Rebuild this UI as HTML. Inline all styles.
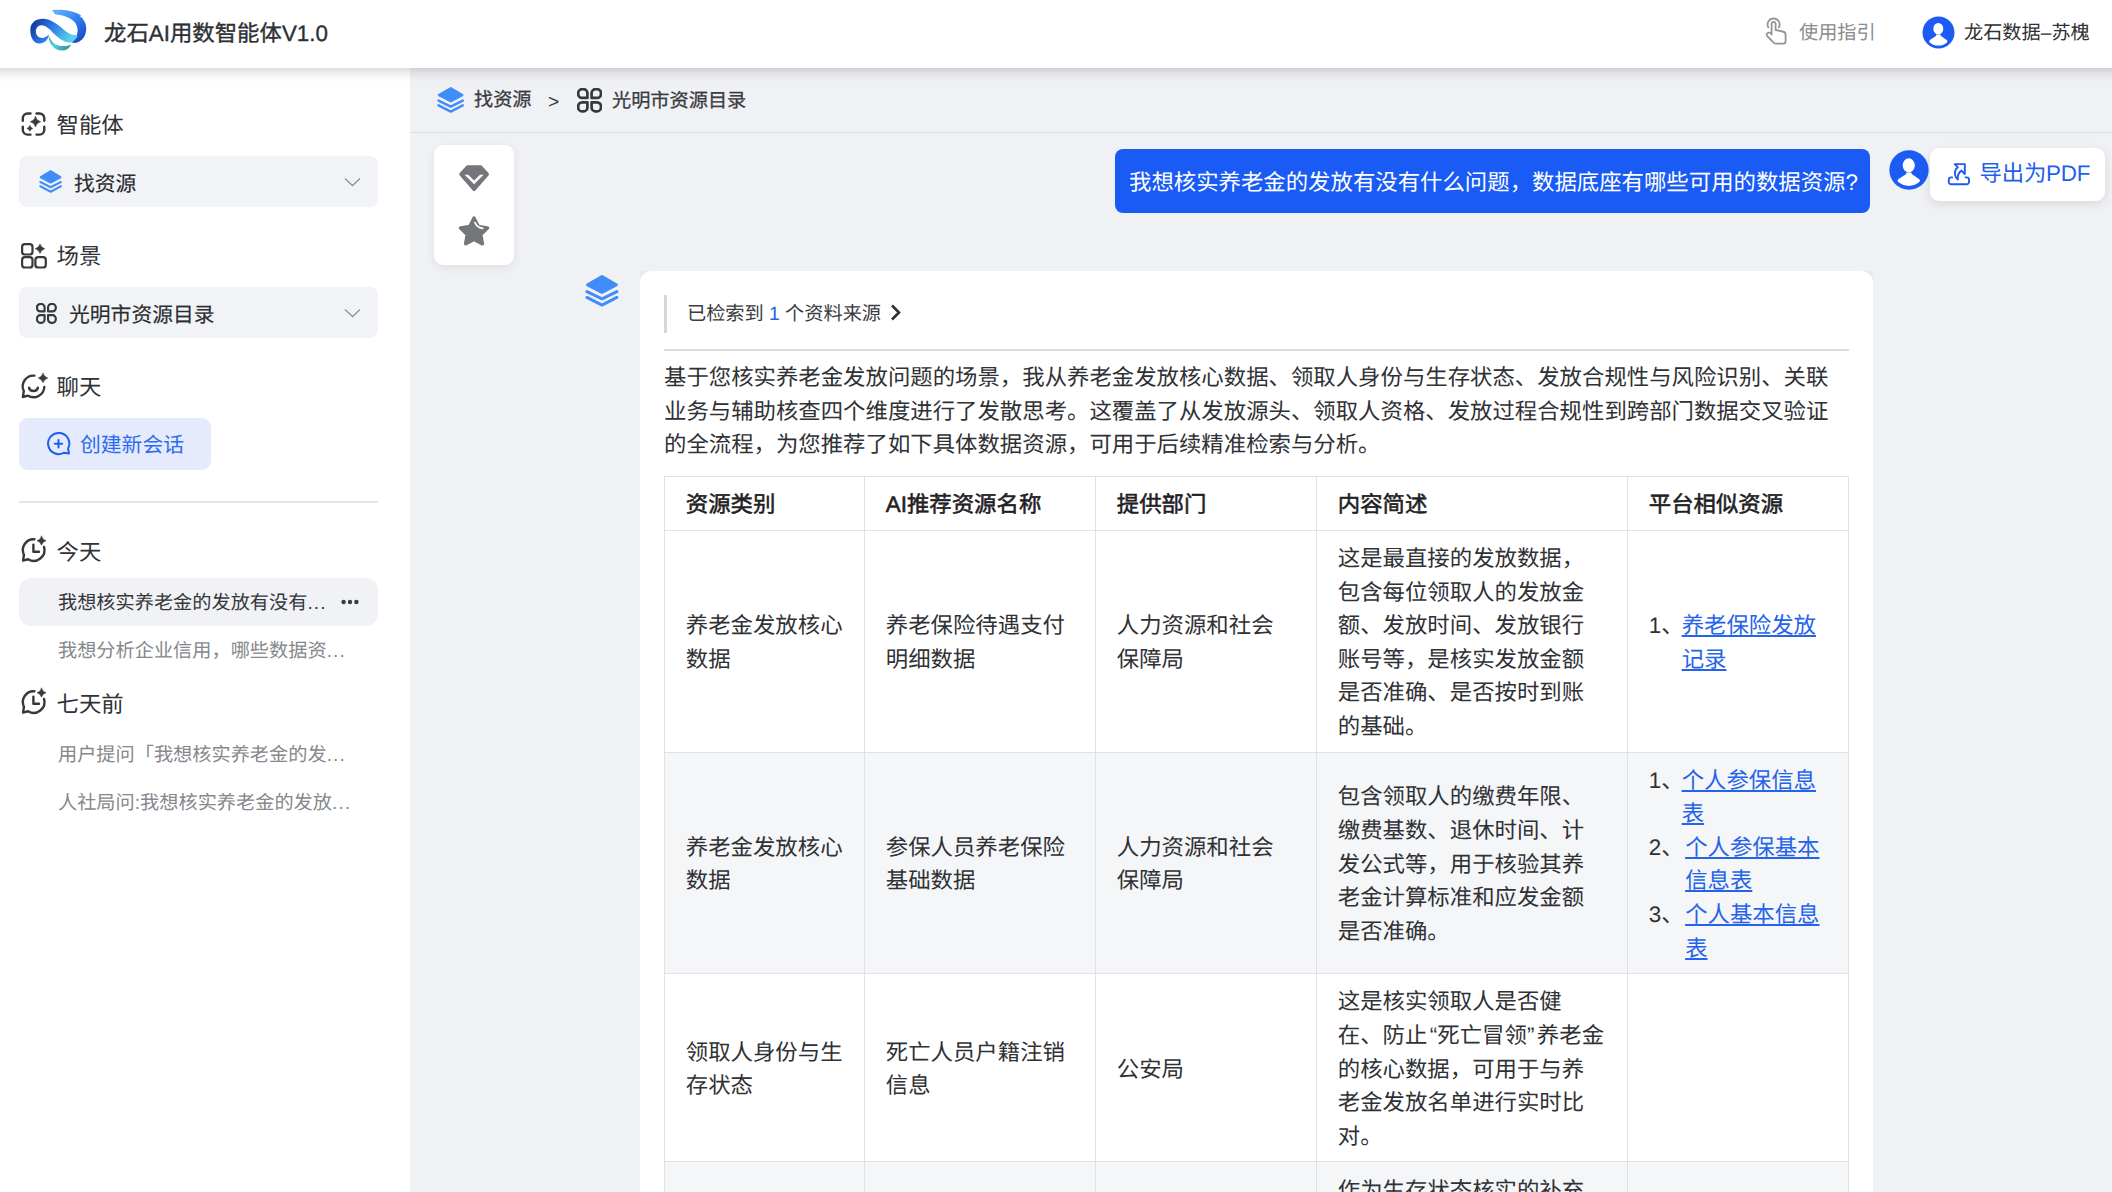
<!DOCTYPE html>
<html lang="zh-CN">
<head>
<meta charset="utf-8">
<style>
*{box-sizing:border-box;margin:0;padding:0}
html,body{width:2112px;height:1192px;overflow:hidden}
body{text-rendering:geometricPrecision;font-family:"Liberation Sans",sans-serif;background:#f0f1f5;color:#2f3135;position:relative;font-size:22.4px}
.abs{position:absolute}
#header{left:0;top:0;width:2112px;height:68px;background:#fff;z-index:5}
#hshadow{left:0;top:68px;width:2112px;height:15px;z-index:5;background:linear-gradient(rgba(0,0,0,0.135),rgba(0,0,0,0.07) 30%,rgba(0,0,0,0.03) 60%,rgba(0,0,0,0.008) 85%,rgba(0,0,0,0))}
#sidebar{left:0;top:68px;width:410px;height:1124px;background:#fff}
.sec{position:absolute;left:21px;height:30px;display:flex;align-items:center}
.sec svg{width:26px;height:26px}
.sec span{margin-left:35.5px;font-size:22.4px;color:#303236;line-height:30px;position:relative;top:1.7px}
.sel{position:absolute;left:19px;width:359px;height:51px;background:#f2f3f7;border-radius:8px}
.sel .t{position:absolute;font-size:20.8px;line-height:30px;top:13.5px;color:#2b2d31;-webkit-text-stroke:0.15px currentColor}
.sel .chev{position:absolute;left:324.5px;top:21px}
.hist{position:absolute;left:19px;width:359px;height:48px;border-radius:12px}
.hist .t{position:absolute;left:39px;top:10.5px;font-size:19.2px;line-height:30px;color:#86888d;white-space:nowrap}

table{margin-top:14.2px;border-collapse:collapse;width:1185px;table-layout:fixed;font-size:22.4px;line-height:33.6px}
th,td{border:1.6px solid #dfe1e6;padding:11.2px 20.8px 8px;text-align:left;vertical-align:middle;color:#2f3135}
th{font-weight:normal;-webkit-text-stroke:0.55px currentColor;color:#1f2124}
tr.alt td{background:#f5f6f8}
.li{display:flex}
.li .n{flex:none;margin-right:-2px}
.li a{color:#2563eb;text-decoration:underline;text-underline-offset:1.5px}
</style>
</head>
<body>
<div id="header" class="abs">
  <svg class="abs" style="left:20px;top:0px" width="80" height="60" viewBox="0 0 80 60">
    <defs>
      <linearGradient id="lgS" x1="16" y1="19" x2="48" y2="42" gradientUnits="userSpaceOnUse">
        <stop offset="0" stop-color="#1838a6"/><stop offset="0.45" stop-color="#2b7ae6"/><stop offset="1" stop-color="#5ad2ee"/>
      </linearGradient>
      <linearGradient id="lgL" x1="10" y1="28" x2="28" y2="42" gradientUnits="userSpaceOnUse">
        <stop offset="0" stop-color="#2f86ea"/><stop offset="1" stop-color="#3d9fe6"/>
      </linearGradient>
      <linearGradient id="lgR" x1="34" y1="10" x2="62" y2="42" gradientUnits="userSpaceOnUse">
        <stop offset="0" stop-color="#63b6fb"/><stop offset="0.55" stop-color="#2f7cf0"/><stop offset="1" stop-color="#1a45c0"/>
      </linearGradient>
      <linearGradient id="lgT" x1="28" y1="36" x2="51" y2="48" gradientUnits="userSpaceOnUse">
        <stop offset="0" stop-color="#3c8fb5"/><stop offset="0.35" stop-color="#55d3e6"/><stop offset="1" stop-color="#2f8a8f"/>
      </linearGradient>
    </defs>
    <path d="M32 10 C42 9 54 10.5 61.5 15.5 L59.5 15.8 C64.5 19.5 67 25 66 31.5 C65 38 60.5 42.5 54 43 L50 41.5 C55.5 40 58 35 57.5 29 C57 21 49 15.5 35 14.2 Z" fill="url(#lgR)"/>
    <path d="M10.3 30 C10.3 22 17 18.3 24 18.8 C31 19.3 37 24 43 29 C47 32.5 51 35.2 56.5 35.2 L57.5 36 C55 41 52 43 49 42.6 C44 42.2 39 38.5 34 33.8 C30 29.5 26 25.3 21.5 25.3 C17.8 25.3 15.8 28.5 15.9 31.8 C16 35.5 19 38.2 22.5 38 C25 37.8 27 36.5 28.8 34.6 C28.3 40 24.5 43.6 19.5 43.6 C13.5 43.4 10.3 37.5 10.3 30 Z" fill="url(#lgS)"/>
    <path d="M28.6 34.8 C28.5 44 34.5 50.8 42 50.6 C46 50.5 49.5 48 51.2 44.4 C47.5 46 43 46.6 38.5 45.5 C33.5 44 30 40 28.6 34.8 Z" fill="url(#lgT)"/>
  </svg>
  <div class="abs" style="left:104px;top:19px;font-size:22.4px;line-height:30px;-webkit-text-stroke:0.35px currentColor;color:#2e3034;white-space:nowrap">龙石AI用数智能体V1.0</div>
  <!-- guide -->
  <svg class="abs" style="left:1758px;top:12px" width="36" height="38" viewBox="0 0 36 38" fill="none" stroke="#939496" stroke-width="1.8" stroke-linecap="round" stroke-linejoin="round">
    <path d="M10.3 15.3 A6 6 0 1 1 20.9 15.3"/>
    <path d="M13.6 22.6 V11.9 A2 2 0 0 1 17.6 11.9 V18 L24.6 19.5 A3.4 3.4 0 0 1 27.6 22.8 V29.2 A2.5 2.5 0 0 1 25.1 31.7 H17.8 A2.6 2.6 0 0 1 15.9 30.9 L9.2 24.1 A2.1 2.1 0 0 1 9.6 21 A2.6 2.6 0 0 1 13.6 22.6 Z"/>
  </svg>
  <div class="abs" style="left:1799px;top:18.5px;font-size:19.2px;line-height:30px;color:#8a8c90;white-space:nowrap">使用指引</div>
  <svg class="abs" style="left:1922px;top:16px" width="33" height="33" viewBox="-16.5 -16.5 33 33"><circle r="16" fill="#1c5cf5"/><ellipse cx="-0.2" cy="-3.8" rx="5" ry="5.8" fill="#fff"/><path d="M-2.4 2 L-2.2 3.3 L-8.6 7.4 Q-10.2 8.8 -8.5 10.2 C-6 12.2 -3.2 13.1 -0.1 13.1 C3 13.1 5.8 12.2 8.2 10.2 Q9.8 8.8 8.2 7.4 L2.2 3.3 L2.1 2 Z" fill="#fff"/></svg>
  <div class="abs" style="left:1964px;top:19px;font-size:19.2px;line-height:30px;color:#2e3034;white-space:nowrap">龙石数据–苏槐</div>
</div>

<div id="hshadow" class="abs"></div>
<div id="sidebar" class="abs"></div>
<!-- sidebar content -->
<svg class="abs" style="left:16px;top:106px" width="36" height="36" viewBox="0 0 36 36" fill="none" stroke="#36383c" stroke-width="2.4" stroke-linecap="round" stroke-linejoin="round">
  <path d="M6.8 14.7 V12.3 A4.8 4.8 0 0 1 11.6 7.5 H14.5 M20.5 7.5 H23.5 A4.8 4.8 0 0 1 28.3 12.3 V14.7 M28.3 20.8 V23.8 A4.8 4.8 0 0 1 23.5 28.6 H20.5 M14.5 28.6 H11.6 A4.8 4.8 0 0 1 6.8 23.8 V20.8"/>
  <path d="M19.50 10.50 Q20.54 14.66 24.70 15.70 Q20.54 16.74 19.50 20.90 Q18.46 16.74 14.30 15.70 Q18.46 14.66 19.50 10.50 Z" fill="#36383c" stroke="#36383c" stroke-width="0.6"/><path d="M13.90 19.50 Q14.54 21.76 16.80 22.40 Q14.54 23.04 13.90 25.30 Q13.26 23.04 11.00 22.40 Q13.26 21.76 13.90 19.50 Z" fill="#36383c" stroke="#36383c" stroke-width="0.5"/></svg>
<svg class="abs" style="left:16px;top:236px" width="36" height="36" viewBox="0 0 36 36" fill="none" stroke="#36383c" stroke-width="2.2">
  <rect x="6.1" y="8.1" width="10.4" height="10.4" rx="2.8"/><rect x="6.1" y="21.1" width="10.4" height="10.4" rx="2.8"/><rect x="19.4" y="21.1" width="10.4" height="10.4" rx="2.8"/>
  <path d="M24.00 7.90 Q25.06 11.64 28.80 12.70 Q25.06 13.76 24.00 17.50 Q22.94 13.76 19.20 12.70 Q22.94 11.64 24.00 7.90 Z" fill="#36383c" stroke="#36383c" stroke-width="0.6"/></svg>
<svg class="abs" style="left:16px;top:368px" width="36" height="36" viewBox="0 0 36 36" fill="none" stroke="#36383c" stroke-width="2.4" stroke-linecap="round" stroke-linejoin="round">
  <path d="M18.44 7.64 A10.8 10.8 0 0 0 7.79 23.13 L6.90 29.00 L11.94 27.66 A10.8 10.8 0 0 0 28.29 18.97"/><path d="M13 19.6 A4.6 4.6 0 0 0 21.9 19.6"/><path d="M27.00 5.35 Q28.05 9.05 31.75 10.10 Q28.05 11.14 27.00 14.85 Q25.95 11.14 22.25 10.10 Q25.95 9.05 27.00 5.35 Z" fill="#36383c" stroke="#36383c" stroke-width="0.6"/></svg>
<svg class="abs" style="left:16px;top:531px" width="36" height="36" viewBox="0 0 36 36" fill="none" stroke="#36383c" stroke-width="2.4" stroke-linecap="round" stroke-linejoin="round">
  <path d="M18.40 8.23 A10.8 10.8 0 0 0 7.94 23.73 L7.05 29.60 L12.09 28.26 A10.8 10.8 0 0 0 28.01 15.93"/><path d="M17.4 13.6 V20.8 H23"/><path d="M25.50 5.20 Q26.49 8.71 30.00 9.70 Q26.49 10.69 25.50 14.20 Q24.51 10.69 21.00 9.70 Q24.51 8.71 25.50 5.20 Z" fill="#36383c" stroke="#36383c" stroke-width="0.6"/></svg>
<svg class="abs" style="left:16px;top:683px" width="36" height="36" viewBox="0 0 36 36" fill="none" stroke="#36383c" stroke-width="2.4" stroke-linecap="round" stroke-linejoin="round">
  <path d="M18.40 8.23 A10.8 10.8 0 0 0 7.94 23.73 L7.05 29.60 L12.09 28.26 A10.8 10.8 0 0 0 28.01 15.93"/><path d="M17.4 13.6 V20.8 H23"/><path d="M25.50 5.20 Q26.49 8.71 30.00 9.70 Q26.49 10.69 25.50 14.20 Q24.51 10.69 21.00 9.70 Q24.51 8.71 25.50 5.20 Z" fill="#36383c" stroke="#36383c" stroke-width="0.6"/></svg>

<div class="sec" style="top:109px">
  <span>智能体</span>
</div>
<div class="sel" style="top:156px">
  <svg class="abs" style="left:19.8px;top:14px" width="23.2" height="22.8" viewBox="0 0 34 31.5" preserveAspectRatio="none"><path d="M17.1 1.6 L31.4 9.9 L17.1 17.3 L2.6 9.9 Z" fill="#418df7" stroke="#418df7" stroke-width="3" stroke-linejoin="round"/><path d="M1.9 16.6 L17.1 23.9 L32.1 16.6 M1.9 22.4 L17.1 30.1 L32.1 22.4" fill="none" stroke="#418df7" stroke-width="2.9" stroke-linecap="round" stroke-linejoin="round"/></svg>
  <div class="t" style="left:55px">找资源</div>
  <svg class="chev" width="17" height="10" viewBox="0 0 17 10"><path d="M1 1.6 L8.5 8.6 L16 1.6" fill="none" stroke="#8d9199" stroke-width="1.3"/></svg>
</div>
<div class="sec" style="top:240px">
  <span>场景</span>
</div>
<div class="sel" style="top:287px">
  <svg class="abs" style="left:17.4px;top:15.8px" width="20.8" height="20.8" viewBox="6.8 5.7 25.2 24.5" preserveAspectRatio="none" fill="none" stroke="#36383c" stroke-width="2.6" stroke-linejoin="round"><path d="M11.90 6.90 H13.30 A3.9 3.9 0 0 1 17.20 10.80 V15.60 H11.90 A3.9 3.9 0 0 1 8.00 11.70 V10.80 A3.9 3.9 0 0 1 11.90 6.90 Z M25.30 6.90 H26.90 A3.9 3.9 0 0 1 30.80 10.80 V11.70 A3.9 3.9 0 0 1 26.90 15.60 H21.40 V10.80 A3.9 3.9 0 0 1 25.30 6.90 Z M11.90 20.10 H17.20 V25.10 A3.9 3.9 0 0 1 13.30 29.00 H11.90 A3.9 3.9 0 0 1 8.00 25.10 V24.00 A3.9 3.9 0 0 1 11.90 20.10 Z M21.40 20.10 H26.90 A3.9 3.9 0 0 1 30.80 24.00 V25.10 A3.9 3.9 0 0 1 26.90 29.00 H25.30 A3.9 3.9 0 0 1 21.40 25.10 V20.10 Z"/></svg>
  <div class="t" style="left:50px">光明市资源目录</div>
  <svg class="chev" width="17" height="10" viewBox="0 0 17 10"><path d="M1 1.6 L8.5 8.6 L16 1.6" fill="none" stroke="#8d9199" stroke-width="1.3"/></svg>
</div>
<div class="sec" style="top:371px">
  <span>聊天</span>
</div>
<div class="abs" style="left:19px;top:418px;width:192px;height:52px;background:#e5ebfd;border-radius:9px">
  <svg class="abs" style="left:27px;top:13px" width="26" height="26" viewBox="0 0 26 26" fill="none" stroke="#1f5ff0" stroke-width="2" stroke-linecap="round" stroke-linejoin="round">
    <path d="M22.06 17.48 L23 22.5 L17.68 21.86 A10.6 10.6 0 1 1 22.06 17.48 Z"/>
    <path d="M12.5 9.1 V16.5 M8.8 12.8 H16.2"/>
  </svg>
  <div class="abs" style="left:61px;top:13px;font-size:20.8px;line-height:30px;color:#2d6bf0;white-space:nowrap">创建新会话</div>
</div>
<div class="abs" style="left:19px;top:501px;width:359px;height:1.6px;background:#e3e4e8"></div>
<div class="sec" style="top:536px">
  <span>今天</span>
</div>
<div class="hist" style="top:578px;background:#f1f2f6">
  <div class="t" style="color:#35373b">我想核实养老金的发放有没有<span style="letter-spacing:1.1px">...</span></div>
  <svg class="abs" style="left:322px;top:21px" width="18" height="6" viewBox="0 0 18 6"><circle cx="2.6" cy="3" r="2.2" fill="#3a3c40"/><circle cx="9" cy="3" r="2.2" fill="#3a3c40"/><circle cx="15.4" cy="3" r="2.2" fill="#3a3c40"/></svg>
</div>
<div class="hist" style="top:626px">
  <div class="t">我想分析企业信用，哪些数据资<span style="letter-spacing:1.1px">...</span></div>
</div>
<div class="sec" style="top:688px">
  <span>七天前</span>
</div>
<div class="hist" style="top:730px">
  <div class="t">用户提问「我想核实养老金的发<span style="letter-spacing:1.1px">...</span></div>
</div>
<div class="hist" style="top:778px">
  <div class="t">人社局问:我想核实养老金的发放<span style="letter-spacing:1.1px">...</span></div>
</div>


<div id="main" class="abs" style="left:410px;top:68px;width:1702px;height:1124px"></div>
<!-- breadcrumb -->
<div class="abs" style="left:410px;top:131.5px;width:1702px;height:1.6px;background:#dcdde1"></div>
<svg class="abs" style="left:437.4px;top:87px" width="27.3" height="25.8" viewBox="0 0 34 31.5" preserveAspectRatio="none"><path d="M17.1 1.6 L31.4 9.9 L17.1 17.3 L2.6 9.9 Z" fill="#418df7" stroke="#418df7" stroke-width="3" stroke-linejoin="round"/><path d="M1.9 16.6 L17.1 23.9 L32.1 16.6 M1.9 22.4 L17.1 30.1 L32.1 22.4" fill="none" stroke="#418df7" stroke-width="2.9" stroke-linecap="round" stroke-linejoin="round"/></svg>
<div class="abs" style="left:474px;top:86px;font-size:19.2px;line-height:30px;color:#3a3c40;-webkit-text-stroke:0.3px currentColor;white-space:nowrap">找资源</div>
<div class="abs" style="left:548px;top:87.5px;font-size:19.2px;line-height:30px;color:#3a3c40;white-space:nowrap">&gt;</div>
<svg class="abs" style="left:576.8px;top:88px" width="25.2" height="24.5" viewBox="6.8 5.7 25.2 24.5" preserveAspectRatio="none" fill="none" stroke="#36383c" stroke-width="2.7" stroke-linejoin="round"><path d="M11.90 6.90 H13.30 A3.9 3.9 0 0 1 17.20 10.80 V15.60 H11.90 A3.9 3.9 0 0 1 8.00 11.70 V10.80 A3.9 3.9 0 0 1 11.90 6.90 Z M25.30 6.90 H26.90 A3.9 3.9 0 0 1 30.80 10.80 V11.70 A3.9 3.9 0 0 1 26.90 15.60 H21.40 V10.80 A3.9 3.9 0 0 1 25.30 6.90 Z M11.90 20.10 H17.20 V25.10 A3.9 3.9 0 0 1 13.30 29.00 H11.90 A3.9 3.9 0 0 1 8.00 25.10 V24.00 A3.9 3.9 0 0 1 11.90 20.10 Z M21.40 20.10 H26.90 A3.9 3.9 0 0 1 30.80 24.00 V25.10 A3.9 3.9 0 0 1 26.90 29.00 H25.30 A3.9 3.9 0 0 1 21.40 25.10 V20.10 Z"/></svg>
<div class="abs" style="left:612px;top:86.5px;font-size:19.2px;line-height:30px;color:#3a3c40;-webkit-text-stroke:0.3px currentColor;white-space:nowrap">光明市资源目录</div>

<!-- toolbar card -->
<div class="abs" style="left:434px;top:145px;width:80px;height:120px;background:#fff;border-radius:9px;box-shadow:0 3px 10px rgba(0,0,0,0.07)">
  <svg class="abs" style="left:24px;top:19px" width="32" height="29" viewBox="0 0 32 29">
    <path d="M9.4 2.7 H22.8 L29.6 10.3 L16.1 25.8 L2.6 10.3 Z" fill="#74767b" stroke="#74767b" stroke-width="2.8" stroke-linejoin="round"/>
    <path d="M6.6 10.8 H10.2 L16.1 16.6 L22 10.8 H25.6 L16.1 20.2 Z" fill="#fff"/>
  </svg>
  <svg class="abs" style="left:24px;top:71px" width="32" height="31" viewBox="0 0 32 31">
    <path d="M16.00 2.20 L20.14 10.60 L29.41 11.94 L22.70 18.48 L24.29 27.71 L16.00 23.35 L7.71 27.71 L9.30 18.48 L2.59 11.94 L11.86 10.60 Z" fill="#74767b" stroke="#74767b" stroke-width="3.6" stroke-linejoin="round"/>
    <path d="M17 6.6 Q18.6 11.6 24.6 12.3" fill="none" stroke="#fff" stroke-width="1.8" stroke-linecap="round"/>
  </svg>
</div>

<!-- user message -->
<div class="abs" style="left:1115px;top:149px;width:755px;height:64px;background:#195bf4;border-radius:8px"></div>
<div class="abs" style="left:1129px;top:168px;font-size:22.4px;line-height:30px;color:#fff;white-space:nowrap">我想核实养老金的发放有没有什么问题，数据底座有哪些可用的数据资源?</div>
<svg class="abs" style="left:1889px;top:149.5px" width="40" height="40" viewBox="-16.5 -16.5 33 33"><circle r="16.2" fill="#1c5cf5"/><ellipse cx="-0.2" cy="-3.8" rx="5" ry="5.8" fill="#fff"/><path d="M-2.4 2 L-2.2 3.3 L-8.6 7.4 Q-10.2 8.8 -8.5 10.2 C-6 12.2 -3.2 13.1 -0.1 13.1 C3 13.1 5.8 12.2 8.2 10.2 Q9.8 8.8 8.2 7.4 L2.2 3.3 L2.1 2 Z" fill="#fff"/></svg>
<div class="abs" style="left:1930px;top:148px;width:175px;height:53px;background:#fff;border-radius:9px;box-shadow:0 3px 11px rgba(0,0,0,0.10)">
  <svg class="abs" style="left:10px;top:7px" width="36" height="36" viewBox="0 0 36 36" fill="none" stroke="#1f5af0" stroke-width="1.9" stroke-linecap="round" stroke-linejoin="round">
    <path d="M12.1 22.4 H11.2 A2.4 2.4 0 0 0 8.8 24.8 V26.9 A2.4 2.4 0 0 0 11.2 29.3 H26.6 A2.4 2.4 0 0 0 29 26.9 V24.8 A2.4 2.4 0 0 0 26.6 22.4 H25.6"/>
    <path d="M14.8 9.1 H24.8 V19 L21.5 15.6 C19 17.3 17.4 20.5 17.8 24.5 C15.4 22.2 14.6 19.5 15 16.8 C15.3 14.8 16.4 13.3 17.9 12.3 Z"/>
  </svg>
  <div class="abs" style="left:49.5px;top:11.2px;font-size:22.4px;line-height:30px;color:#1f5ff0;letter-spacing:-0.2px;white-space:nowrap">导出为PDF</div>
</div>

<!-- AI answer -->
<svg class="abs" style="left:585.2px;top:275.1px" width="33.8" height="31.5" viewBox="0 0 34 31.5" preserveAspectRatio="none"><path d="M17.1 1.6 L31.4 9.9 L17.1 17.3 L2.6 9.9 Z" fill="#418df7" stroke="#418df7" stroke-width="3" stroke-linejoin="round"/><path d="M1.9 16.6 L17.1 23.9 L32.1 16.6 M1.9 22.4 L17.1 30.1 L32.1 22.4" fill="none" stroke="#418df7" stroke-width="2.9" stroke-linecap="round" stroke-linejoin="round"/></svg>
<div class="abs" style="left:640px;top:271px;width:12px;height:12px;background:#e9eaee"></div><div class="abs" style="left:1861px;top:271px;width:12px;height:12px;background:#e9eaee"></div>
<div id="card" class="abs" style="left:640px;top:271px;width:1233px;height:1000px;background:#fff;border-radius:12px 12px 0 0;padding:24px">
  <div style="position:relative;height:56px;border-bottom:2px solid #dcdde0">
    <div class="abs" style="left:0;top:0;width:3.2px;height:38px;background:#d8d8da"></div>
    <div class="abs" style="left:23px;top:5.3px;font-size:19.2px;line-height:30px;color:#3a3c40;white-space:nowrap">已检索到 <span style="color:#2563eb">1</span> 个资料来源
      <svg style="margin-left:4px;vertical-align:-1px" width="11" height="17" viewBox="0 0 11 17"><path d="M2 1.5 L9 8.5 L2 15.5" fill="none" stroke="#2f3135" stroke-width="2.6"/></svg>
    </div>
  </div>
  <p style="margin-top:10px;font-size:22.4px;line-height:33.6px;color:#2f3135;width:1185px">基于您核实养老金发放问题的场景，我从养老金发放核心数据、领取人身份与生存状态、发放合规性与风险识别、关联业务与辅助核查四个维度进行了发散思考。这覆盖了从发放源头、领取人资格、发放过程合规性到跨部门数据交叉验证的全流程，为您推荐了如下具体数据资源，可用于后续精准检索与分析。</p>
  <table>
    <tr><th style="width:200px">资源类别</th><th style="width:231px">AI推荐资源名称</th><th style="width:221px">提供部门</th><th style="width:311px">内容简述</th><th>平台相似资源</th></tr>
    <tr>
      <td>养老金发放核心数据</td><td>养老保险待遇支付明细数据</td><td>人力资源和社会保障局</td>
      <td>这是最直接的发放数据，包含每位领取人的发放金额、发放时间、发放银行账号等，是核实发放金额是否准确、是否按时到账的基础。</td>
      <td><div class="li"><span class="n">1、</span><a>养老保险发放记录</a></div></td>
    </tr>
    <tr class="alt">
      <td>养老金发放核心数据</td><td>参保人员养老保险基础数据</td><td>人力资源和社会保障局</td>
      <td>包含领取人的缴费年限、缴费基数、退休时间、计发公式等，用于核验其养老金计算标准和应发金额是否准确。</td>
      <td><div class="li"><span class="n">1、</span><a>个人参保信息表</a></div><div class="li"><span class="n" style="margin-right:1.5px">2、</span><a>个人参保基本信息表</a></div><div class="li"><span class="n" style="margin-right:1.5px">3、</span><a>个人基本信息表</a></div></td>
    </tr>
    <tr>
      <td>领取人身份与生存状态</td><td>死亡人员户籍注销信息</td><td>公安局</td>
      <td>这是核实领取人是否健在、防止<span style="padding-left:2.5px">“</span>死亡冒领<span style="padding-right:2.5px">”</span>养老金的核心数据，可用于与养老金发放名单进行实时比对。</td>
      <td></td>
    </tr>
    <tr class="alt">
      <td>领取人身份与生存状态</td><td>居民生存状态数据</td><td>卫生健康局</td>
      <td>作为生存状态核实的补充数据，包含就医记录等信息，可用于辅助判断领取人是否健在。</td>
      <td></td>
    </tr>
  </table>
</div>

</body>
</html>
